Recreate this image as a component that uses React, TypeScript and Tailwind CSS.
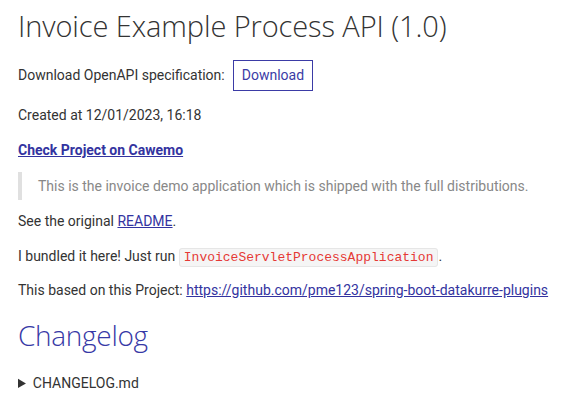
import React from 'react';

const body = { fontFamily: 'Roboto, "Liberation Sans", sans-serif' };
const heading = { fontFamily: '"Open Sans", "Liberation Sans", sans-serif' };

const App: React.FC = () => {
    return (
        <div className="w-[572px] h-[407px] overflow-hidden bg-white px-[18px] text-[14px] text-[#333]" style={body}>
            <h1 className="pt-[8px] text-[29px] leading-[36px] font-light text-[#333] tracking-[-0.1px]" style={heading}>
                Invoice Example Process API (1.0)
            </h1>

            <div className="mt-[16px] flex items-center gap-[8px] h-[30px]">
                <span>Download OpenAPI specification:</span>
                <button className="h-[31px] px-[8px] border border-[#3b3ba6] text-[#3b3ba6] text-[14px]">
                    Download
                </button>
            </div>

            <p className="mt-[15px] leading-[20px]">Created at 12/01/2023, 16:18</p>

            <p className="mt-[15px] leading-[20px]">
                <a href="#" className="font-bold text-[#3333a0] underline">Check Project on Cawemo</a>
            </p>

            <blockquote className="mt-[12px] border-l-[4px] border-[#e0e0e0] pl-[16px] py-[4px] text-[#888] leading-[20px]">
                This is the invoice demo application which is shipped with the full distributions.
            </blockquote>

            <p className="mt-[11px] leading-[20px]">
                See the original <a href="#" className="text-[#3333a0] underline">README</a>.
            </p>

            <p className="mt-[15px] leading-[20px]">
                I bundled it here! Just run{' '}
                <code
                    className="bg-[#f5f5f5] border border-[#e6e6e6] rounded-[3px] px-[4px] py-[1px] text-[#e53935] text-[13px]"
                    style={{ fontFamily: '"Liberation Mono", "DejaVu Sans Mono", monospace' }}
                >
                    InvoiceServletProcessApplication
                </code>
                .
            </p>

            <p className="mt-[12px] leading-[20px]">
                This based on this Project:{' '}
                <a href="#" className="text-[#3333a0] underline">https://github.com/pme123/spring-boot-datakurre-plugins</a>
            </p>

            <h2 className="mt-[17px] text-[28px] leading-[36px] font-light text-[#3739a6] tracking-[-0.3px]" style={heading}>
                Changelog
            </h2>

            <details className="mt-[20px] leading-[20px]">
                <summary className="cursor-pointer">CHANGELOG.md</summary>
            </details>
        </div>
    );
};

export default App;
